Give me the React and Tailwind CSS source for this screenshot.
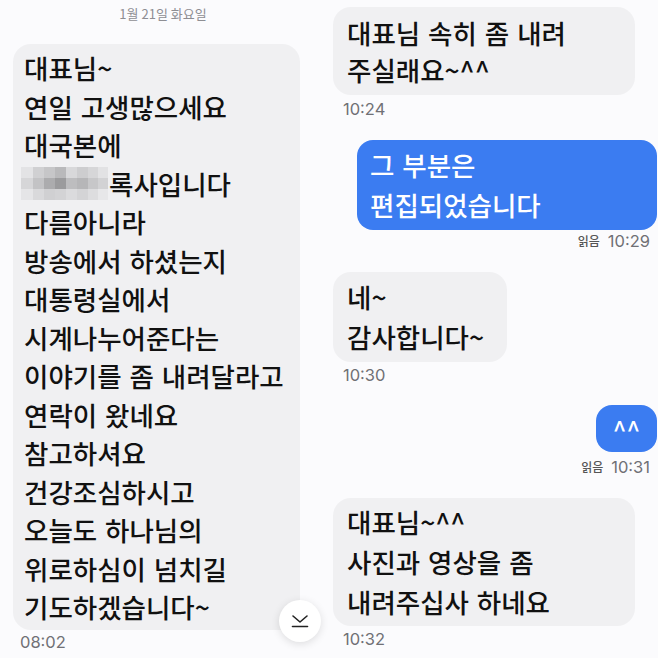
import React from 'react';

const blur = [
    ['#e3e3e5', '#d0d0d2', '#c6c6c8', '#b9b9bb', '#d8d8da', '#cdcdcf', '#d6d6d8', '#e2e2e4'],
    ['#d6d6d8', '#c3c3c5', '#acacae', '#9b9b9d', '#bdbdbf', '#b6b6b8', '#c7c7c9', '#d2d2d4'],
    ['#e5e5e7', '#d9d9db', '#d0d0d2', '#d3d3d5', '#dbdbdd', '#d4d4d6', '#dddddf', '#e7e7e9'],
];

const leftLines = [
    '대표님~',
    '연일 고생많으세요',
    '대국본에',
    null,
    '다름아니라',
    '방송에서 하셨는지',
    '대통령실에서',
    '시계나누어준다는',
    '이야기를 좀 내려달라고',
    '연락이 왔네요',
    '참고하셔요',
    '건강조심하시고',
    '오늘도 하나님의',
    '위로하심이 넘치길',
    '기도하겠습니다~',
];

const kr = "font-['Noto_Sans_CJK_KR',sans-serif]";
const num = "font-['Inter','Noto_Sans_CJK_KR',sans-serif]";

const Time = ({ children }) => (
    <p className={`${num} text-[16.5px] leading-[20px] text-[#707075]`}>{children}</p>
);

const Read = ({ time, className = '' }) => (
    <div className={`flex items-center justify-end gap-[8px] mr-[8px] leading-[18px] ${className}`}>
        <span className={`${kr} text-[12px] font-medium text-[#555]`}>읽음</span>
        <span className={`${num} text-[16.5px] text-[#707075]`}>{time}</span>
    </div>
);

const App = () => {
    return (
        <div className={`flex w-[658px] h-[658px] overflow-hidden bg-[#fbfbfd] ${kr}`}>
            {/* Left screenshot */}
            <div className="relative w-[326px] flex flex-col">
                <div className="h-[28px] flex items-center justify-center text-[13px] text-[#8e8e93]">
                    1월 21일 화요일
                </div>
                <div className="mt-[16px] ml-[13px] w-[287px] rounded-[18px] bg-[#f0f0f2] pl-[11px] pt-[5px] pb-[3px] text-[26.5px] font-medium leading-[38.5px] text-[#111] [word-spacing:2px]">
                    {leftLines.map((line, i) =>
                        line === null ? (
                            <div key={i} className="flex items-center">
                                <span className="-ml-[3px] mr-[1px] grid grid-cols-[12px_11px_11px_11px_11px_11px_10px_10px] grid-rows-[11px_11px_11px]">
                                    {blur.flat().map((c, j) => (
                                        <span key={j} style={{ backgroundColor: c }} />
                                    ))}
                                </span>
                                <span>록사입니다</span>
                            </div>
                        ) : (
                            <div key={i} className="whitespace-nowrap">{line}</div>
                        )
                    )}
                </div>
                <div className="mt-[2px] ml-[20px]">
                    <Time>08:02</Time>
                </div>

                {/* scroll to bottom */}
                <div className="absolute left-[279px] top-[600px] w-[42px] h-[42px] rounded-full bg-white shadow-[0_2px_8px_rgba(0,0,0,0.12)] flex items-center justify-center">
                    <svg width="18" height="14" viewBox="0 0 18 14" fill="none" stroke="#222" strokeWidth="1.6" strokeLinecap="round" strokeLinejoin="round">
                        <polyline points="2,2 9,8 16,2" />
                        <line x1="1.5" y1="12.5" x2="16.5" y2="12.5" />
                    </svg>
                </div>
            </div>

            {/* Right screenshot */}
            <div className="flex-1 flex flex-col pl-[7px] text-[26.5px] font-medium text-[#111] [word-spacing:2px]">
                <div className="mt-[7px] w-[302px] rounded-[18px] bg-[#f0f0f2] px-[14px] py-[7px] leading-[37px]">
                    <div>대표님 속히 좀 내려</div>
                    <div>주실래요~^^</div>
                </div>
                <div className="mt-[4px] ml-[10px] font-normal">
                    <Time>10:24</Time>
                </div>

                <div className="mt-[21px] self-end mr-[1px] w-[300px] rounded-[16px] bg-[#3b7cf1] pl-[13px] py-[5px] leading-[40px] text-white">
                    <div>그 부분은</div>
                    <div>편집되었습니다</div>
                </div>
                <Read time="10:29" className="mt-[2px] font-normal" />

                <div className="mt-[22px] w-[174px] rounded-[18px] bg-[#f0f0f2] pl-[14px] py-[5px] leading-[40px]">
                    <div>네~</div>
                    <div>감사합니다~</div>
                </div>
                <div className="mt-[3px] ml-[10px] font-normal">
                    <Time>10:30</Time>
                </div>

                <div className="mt-[20px] self-end mr-[1px] w-[61px] h-[47px] rounded-[16px] bg-[#3b7cf1] flex items-center justify-center text-white text-[24px] leading-none">
                    ^^
                </div>
                <Read time="10:31" className="mt-[6px] font-normal" />

                <div className="mt-[22px] w-[302px] rounded-[18px] bg-[#f0f0f2] pl-[14px] py-[4px] leading-[40px]">
                    <div>대표님~^^</div>
                    <div>사진과 영상을 좀</div>
                    <div>내려주십사 하네요</div>
                </div>
                <div className="mt-[3px] ml-[10px] font-normal">
                    <Time>10:32</Time>
                </div>
            </div>
        </div>
    );
};

export default App;
